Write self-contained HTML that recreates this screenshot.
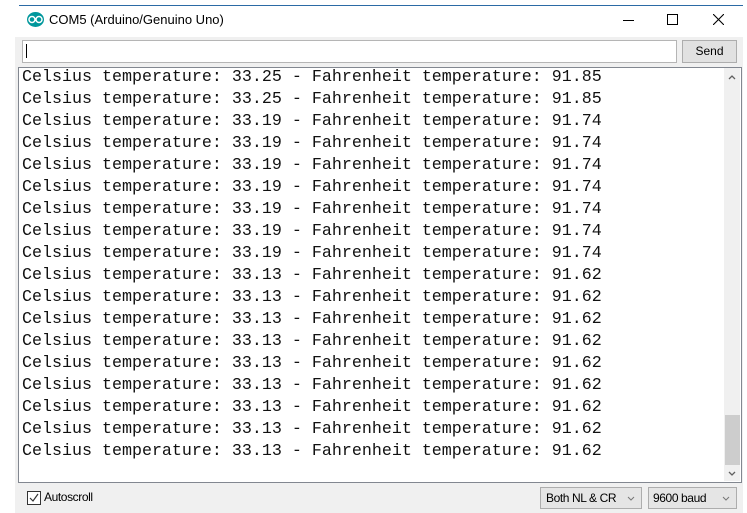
<!DOCTYPE html>
<html><head><style>
body{margin:0;width:747px;height:513px;background:#fff;position:relative;overflow:hidden;font-family:"Liberation Sans",sans-serif}
.a{position:absolute}
.ln{position:absolute;left:22px;font-family:"Liberation Mono",monospace;font-size:16.67px;color:#111;white-space:pre;line-height:22px}
</style></head><body>
<div class="a" style="left:19px;top:5px;width:724px;height:1px;background:#2b6aa5"></div>
<div class="a" style="left:19px;top:6px;width:724px;height:31px;background:#fff"></div>
<svg class="a" style="left:27px;top:12px" width="17" height="15" viewBox="0 0 17 15"><ellipse cx="8.5" cy="7.5" rx="8.5" ry="7.5" fill="#00979c"/><circle cx="5" cy="7.5" r="3" fill="none" stroke="#fff" stroke-width="1.5"/><circle cx="12" cy="7.5" r="3" fill="none" stroke="#fff" stroke-width="1.5"/></svg>
<div class="a" style="left:49px;top:12px;font-size:13px;color:#000">COM5 (Arduino/Genuino Uno)</div>
<div class="a" style="left:623px;top:20px;width:11px;height:1px;background:#000"></div>
<div class="a" style="left:667px;top:14px;width:9px;height:9px;border:1px solid #000"></div>
<svg class="a" style="left:713px;top:14px" width="11" height="11"><path d="M0 0L11 11M11 0L0 11" stroke="#000" stroke-width="1.1"/></svg>
<div class="a" style="left:15px;top:37px;width:728px;height:476px;background:#f0f0f0"></div>
<div class="a" style="left:22px;top:40px;width:653px;height:21px;border:1px solid #b5b5b5;background:#fff"></div>
<div class="a" style="left:26px;top:44px;width:1px;height:14px;background:#000"></div>
<div class="a" style="left:682px;top:40px;width:53px;height:21px;border:1px solid #adadad;background:#e1e1e1;font-size:12px;text-align:center;line-height:21px">Send</div>
<div class="a" style="left:18px;top:67px;width:722px;height:414px;border:1px solid #828790;background:#fff"></div>
<div class="a" style="left:724px;top:68px;width:16px;height:413px;background:#f0f0f0"></div>
<div class="a" style="left:725px;top:415px;width:15px;height:50px;background:#cdcdcd"></div>
<svg class="a" style="left:728px;top:74px" width="8" height="6"><path d="M1 5L4 2L7 5" stroke="#606060" stroke-width="1.3" fill="none"/></svg>
<svg class="a" style="left:728px;top:471px" width="8" height="6"><path d="M1 1L4 4L7 1" stroke="#606060" stroke-width="1.3" fill="none"/></svg>
<div class="ln" style="top:67px">Celsius temperature: 33.25 - Fahrenheit temperature: 91.85
Celsius temperature: 33.25 - Fahrenheit temperature: 91.85
Celsius temperature: 33.19 - Fahrenheit temperature: 91.74
Celsius temperature: 33.19 - Fahrenheit temperature: 91.74
Celsius temperature: 33.19 - Fahrenheit temperature: 91.74
Celsius temperature: 33.19 - Fahrenheit temperature: 91.74
Celsius temperature: 33.19 - Fahrenheit temperature: 91.74
Celsius temperature: 33.19 - Fahrenheit temperature: 91.74
Celsius temperature: 33.19 - Fahrenheit temperature: 91.74
Celsius temperature: 33.13 - Fahrenheit temperature: 91.62
Celsius temperature: 33.13 - Fahrenheit temperature: 91.62
Celsius temperature: 33.13 - Fahrenheit temperature: 91.62
Celsius temperature: 33.13 - Fahrenheit temperature: 91.62
Celsius temperature: 33.13 - Fahrenheit temperature: 91.62
Celsius temperature: 33.13 - Fahrenheit temperature: 91.62
Celsius temperature: 33.13 - Fahrenheit temperature: 91.62
Celsius temperature: 33.13 - Fahrenheit temperature: 91.62
Celsius temperature: 33.13 - Fahrenheit temperature: 91.62</div>
<div class="a" style="left:27px;top:491px;width:12px;height:12px;border:1px solid #333;background:#fff"></div>
<svg class="a" style="left:29px;top:493px" width="10" height="10"><path d="M1 5L4 8L9 1" stroke="#333" stroke-width="1.2" fill="none"/></svg>
<div class="a" style="left:44px;top:490px;font-size:12px;letter-spacing:-0.4px">Autoscroll</div>
<div class="a" style="left:540px;top:487px;width:100px;height:20px;border:1px solid #adadad;background:#e5e5e5;font-size:12px;line-height:20px;letter-spacing:-0.4px"><span style="margin-left:5px">Both NL &amp; CR</span></div>
<svg class="a" style="left:627px;top:496px" width="8" height="5"><path d="M1 1L4 4L7 1" stroke="#777" fill="none"/></svg>
<div class="a" style="left:648px;top:487px;width:87px;height:20px;border:1px solid #adadad;background:#e5e5e5;font-size:12px;line-height:20px;letter-spacing:-0.4px"><span style="margin-left:4px">9600 baud</span></div>
<svg class="a" style="left:722px;top:496px" width="8" height="5"><path d="M1 1L4 4L7 1" stroke="#777" fill="none"/></svg>
</body></html>
